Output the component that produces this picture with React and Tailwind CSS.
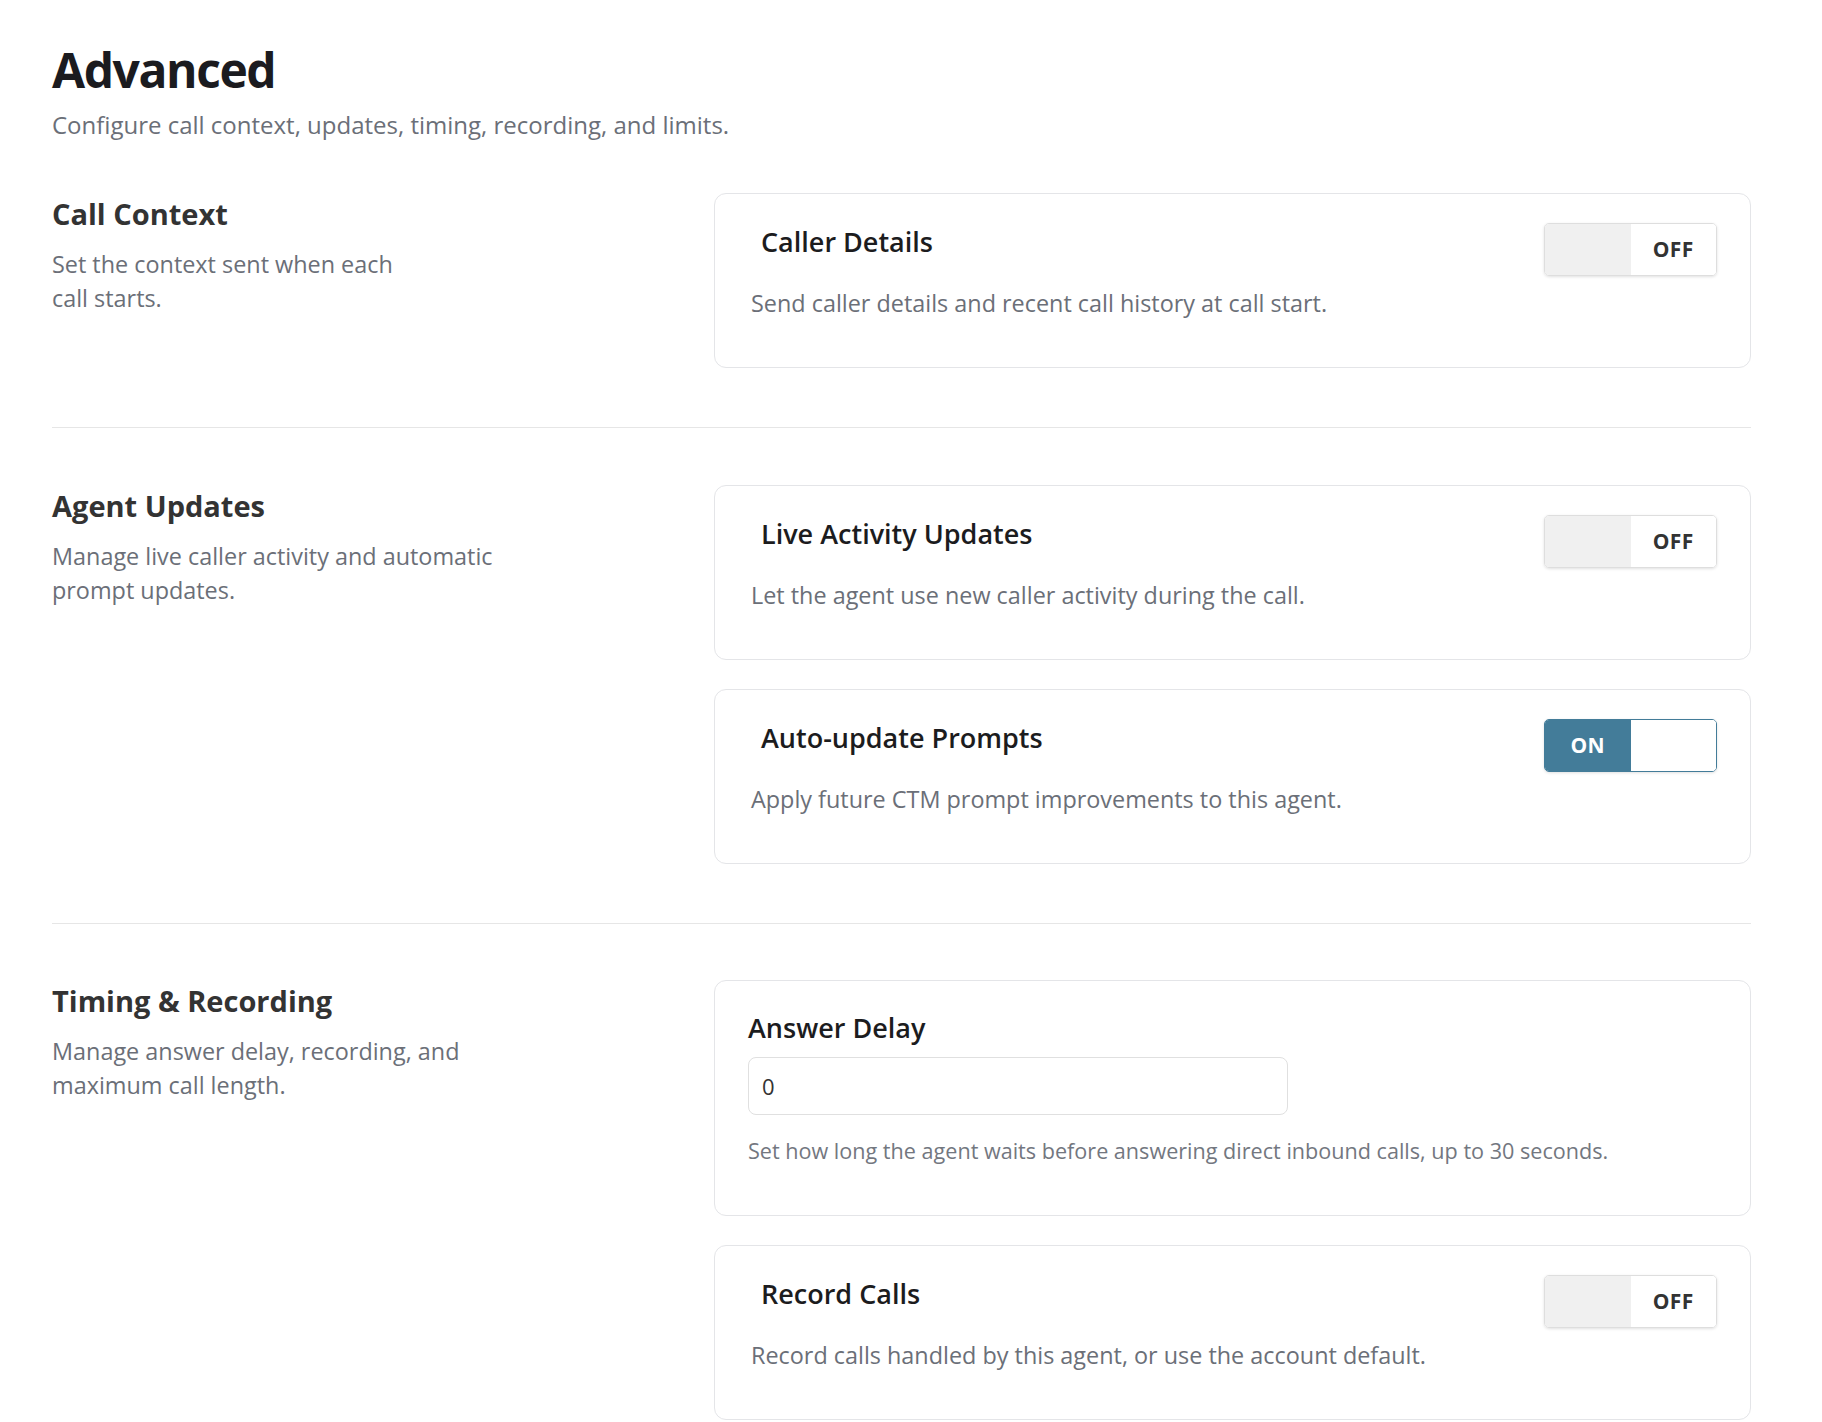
import React, { useState } from 'react';

function Toggle({ on, onChange }) {
  return (
    <button
      type="button"
      onClick={() => onChange(!on)}
      className={`flex h-[53px] w-[173px] shrink-0 overflow-hidden rounded-[5px] border shadow-[0_1px_3px_rgba(0,0,0,0.12)] ${
        on ? 'border-[#437c99]' : 'border-[#dedede]'
      }`}
    >
      {on ? (
        <>
          <span className="flex flex-1 items-center justify-center bg-[#437c99] text-[21px] font-bold tracking-[0.02em] text-white">
            ON
          </span>
          <span className="flex-1 bg-white" />
        </>
      ) : (
        <>
          <span className="flex-1 bg-[#f0f0f0]" />
          <span className="flex flex-1 items-center justify-center bg-white text-[21px] font-bold tracking-[0.02em] text-[#333]">
            OFF
          </span>
        </>
      )}
    </button>
  );
}

function ToggleCard({ title, description, defaultOn = false }) {
  const [on, setOn] = useState(defaultOn);
  return (
    <div className="flex items-start justify-between rounded-xl border border-[#e4e5e8] bg-white pt-[29px] pr-[33px] pb-[49px] pl-[36px]">
      <div>
        <h3 className="mt-[2px] pl-[10px] text-[27px] font-semibold leading-[34px] text-[#1c1c1e]">{title}</h3>
        <p className="mt-[29px] text-[23.4px] leading-[30px] text-[#6b6f78]">{description}</p>
      </div>
      <Toggle on={on} onChange={setOn} />
    </div>
  );
}

function Section({ title, lines, children, last = false }) {
  return (
    <section
      className={`grid grid-cols-[662px_1fr] ${last ? 'pt-[56px]' : 'border-b border-[#e6e6e6] pb-[59px]'}`}
    >
      <div>
        <h2 className="text-[29px] font-bold leading-[42px] text-[#333]">{title}</h2>
        <p className="mt-[12px] text-[23.4px] leading-[34px] text-[#6b6f78]">
          {lines.map((line, i) => (
            <span key={i} className="block">
              {line}
            </span>
          ))}
        </p>
      </div>
      <div className="flex flex-col gap-[29px]">{children}</div>
    </section>
  );
}

export default function App() {
  const [delay, setDelay] = useState('0');

  return (
    <div className="min-h-screen bg-white pt-[41px] pr-[71px] pl-[52px] font-['Open_Sans',_'Liberation_Sans',_sans-serif]">
      <header className="mb-[52px]">
        <h1 className="text-[48px] font-bold leading-[58px] tracking-[-0.03em] text-[#1b1b1f]">Advanced</h1>
        <p className="mt-[10px] text-[24px] leading-[32px] text-[#6b6f78]">
          Configure call context, updates, timing, recording, and limits.
        </p>
      </header>

      <Section title="Call Context" lines={['Set the context sent when each', 'call starts.']}>
        <ToggleCard
          title="Caller Details"
          description="Send caller details and recent call history at call start."
        />
      </Section>

      <div className="pt-[57px]">
        <Section
          title="Agent Updates"
          lines={['Manage live caller activity and automatic', 'prompt updates.']}
        >
          <ToggleCard
            title="Live Activity Updates"
            description="Let the agent use new caller activity during the call."
          />
          <ToggleCard
            title="Auto-update Prompts"
            description="Apply future CTM prompt improvements to this agent."
            defaultOn
          />
        </Section>
      </div>

      <Section
        title="Timing & Recording"
        lines={['Manage answer delay, recording, and', 'maximum call length.']}
        last
      >
        <div className="rounded-xl border border-[#e4e5e8] bg-white pt-[30px] pr-[33px] pb-[50px] pl-[33px]">
          <label className="block text-[27px] font-semibold leading-[34px] text-[#1c1c1e]">Answer Delay</label>
          <input
            type="text"
            value={delay}
            onChange={(e) => setDelay(e.target.value)}
            className="mt-[12px] h-[58px] w-[540px] rounded-lg border border-[#e0e0e0] px-[13px] text-[22px] text-[#333] outline-none"
          />
          <p className="mt-[22px] text-[21.6px] leading-[28px] text-[#73777f]">
            Set how long the agent waits before answering direct inbound calls, up to 30 seconds.
          </p>
        </div>
        <ToggleCard
          title="Record Calls"
          description="Record calls handled by this agent, or use the account default."
        />
      </Section>
    </div>
  );
}
